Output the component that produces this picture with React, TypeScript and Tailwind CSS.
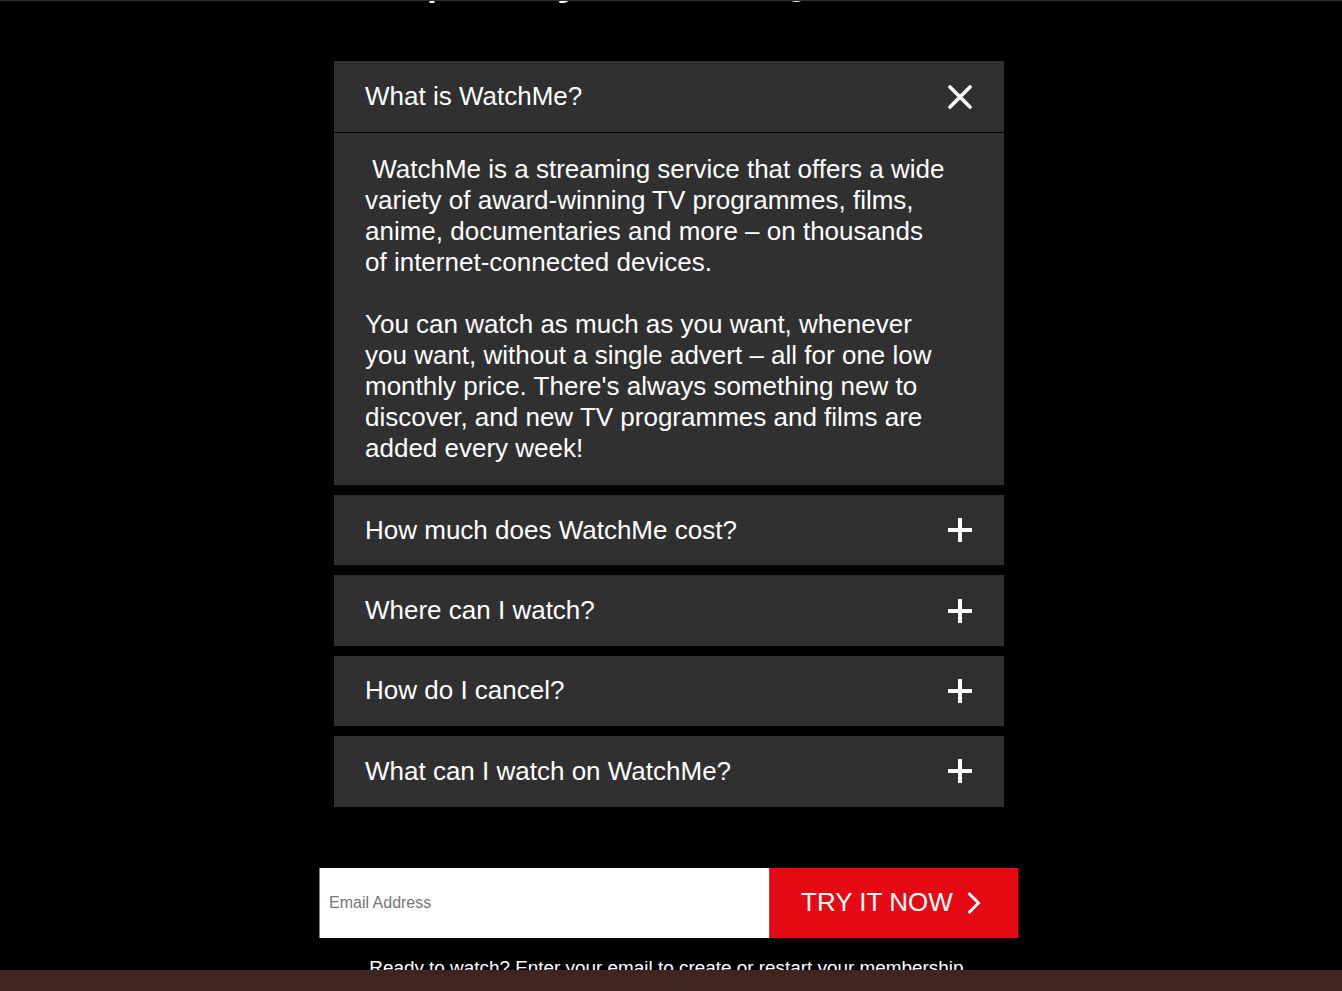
import { useState } from "react";

const faqs = [
  "What is WatchMe?",
  "How much does WatchMe cost?",
  "Where can I watch?",
  "How do I cancel?",
  "What can I watch on WatchMe?",
];

function CloseIcon() {
  return (
    <svg width="24" height="24" viewBox="0 0 24 24" fill="none">
      <path d="M2 2L22 22M22 2L2 22" stroke="white" strokeWidth="3.6" strokeLinecap="round" />
    </svg>
  );
}

function PlusIcon() {
  return (
    <svg width="24" height="24" viewBox="0 0 24 24" fill="none">
      <path d="M12 0V24M0 12H24" stroke="white" strokeWidth="4" />
    </svg>
  );
}

export default function App() {
  const [open, setOpen] = useState(0);

  return (
    <div
      className="relative h-[991px] overflow-hidden bg-black text-white"
      style={{ fontFamily: '"Liberation Sans", Arial, sans-serif' }}
    >
      <div className="border-t border-[#2c3338]">
        <div className="h-[6px] overflow-hidden pr-[4px]">
          <h1 className="-mt-[56px] text-center text-[55px] leading-[55px] font-normal">
            Frequently Asked Questions
          </h1>
        </div>

        <div className="mx-auto mt-[54px] flex w-[670px] -translate-x-[2px] flex-col gap-[10px]">
          {faqs.map((q, i) => (
            <div key={q} className="bg-[#303030]">
              <button
                onClick={() => setOpen(open === i ? -1 : i)}
                className={`flex w-full items-center justify-between pl-[31px] pr-[32px] text-left text-[26px] ${
                  open === i ? "h-[72px] border-b border-black" : "h-[70.4px]"
                }`}
              >
                <span>{q}</span>
                {open === i ? <CloseIcon /> : <PlusIcon />}
              </button>
              {open === i && (
                <div className="py-[21px] pl-[31px]">
                  <p className="w-[582px] text-[26px] leading-[31px]">
                    {"\u00a0"}WatchMe is a streaming service that offers a wide variety of
                    award-winning TV programmes, films, anime, documentaries and more – on
                    thousands of internet-connected devices.
                    <br />
                    <br />
                    You can watch as much as you want, whenever you want, without a single
                    advert – all for one low monthly price. There's always something new to
                    discover, and new TV programmes and films are added every week!
                  </p>
                </div>
              )}
            </div>
          ))}
        </div>

        <form
          onSubmit={(e) => e.preventDefault()}
          className="mx-auto mt-[61px] flex h-[70px] w-[699px] -translate-x-[2.5px]"
        >
          <input
            type="email"
            placeholder="Email Address"
            className="h-full w-[450px] bg-white px-[10px] text-[16px] text-black outline-none placeholder:text-[#757575]"
          />
          <button
            type="submit"
            className="flex h-full w-[249px] items-center gap-[14px] bg-[#e50914] pl-[32px] text-[26px]"
          >
            TRY IT NOW
            <svg width="16" height="22" viewBox="0 0 16 22" fill="none">
              <path d="M2 1L12 11L2 21" stroke="white" strokeWidth="3" />
            </svg>
          </button>
        </form>

        <p className="mt-[16px] -translate-x-[2px] text-center text-[18.9px]">
          Ready to watch? Enter your email to create or restart your membership.
        </p>
      </div>

      <div className="absolute inset-x-0 bottom-0 h-[21px] bg-[#41231f]" />
    </div>
  );
}
